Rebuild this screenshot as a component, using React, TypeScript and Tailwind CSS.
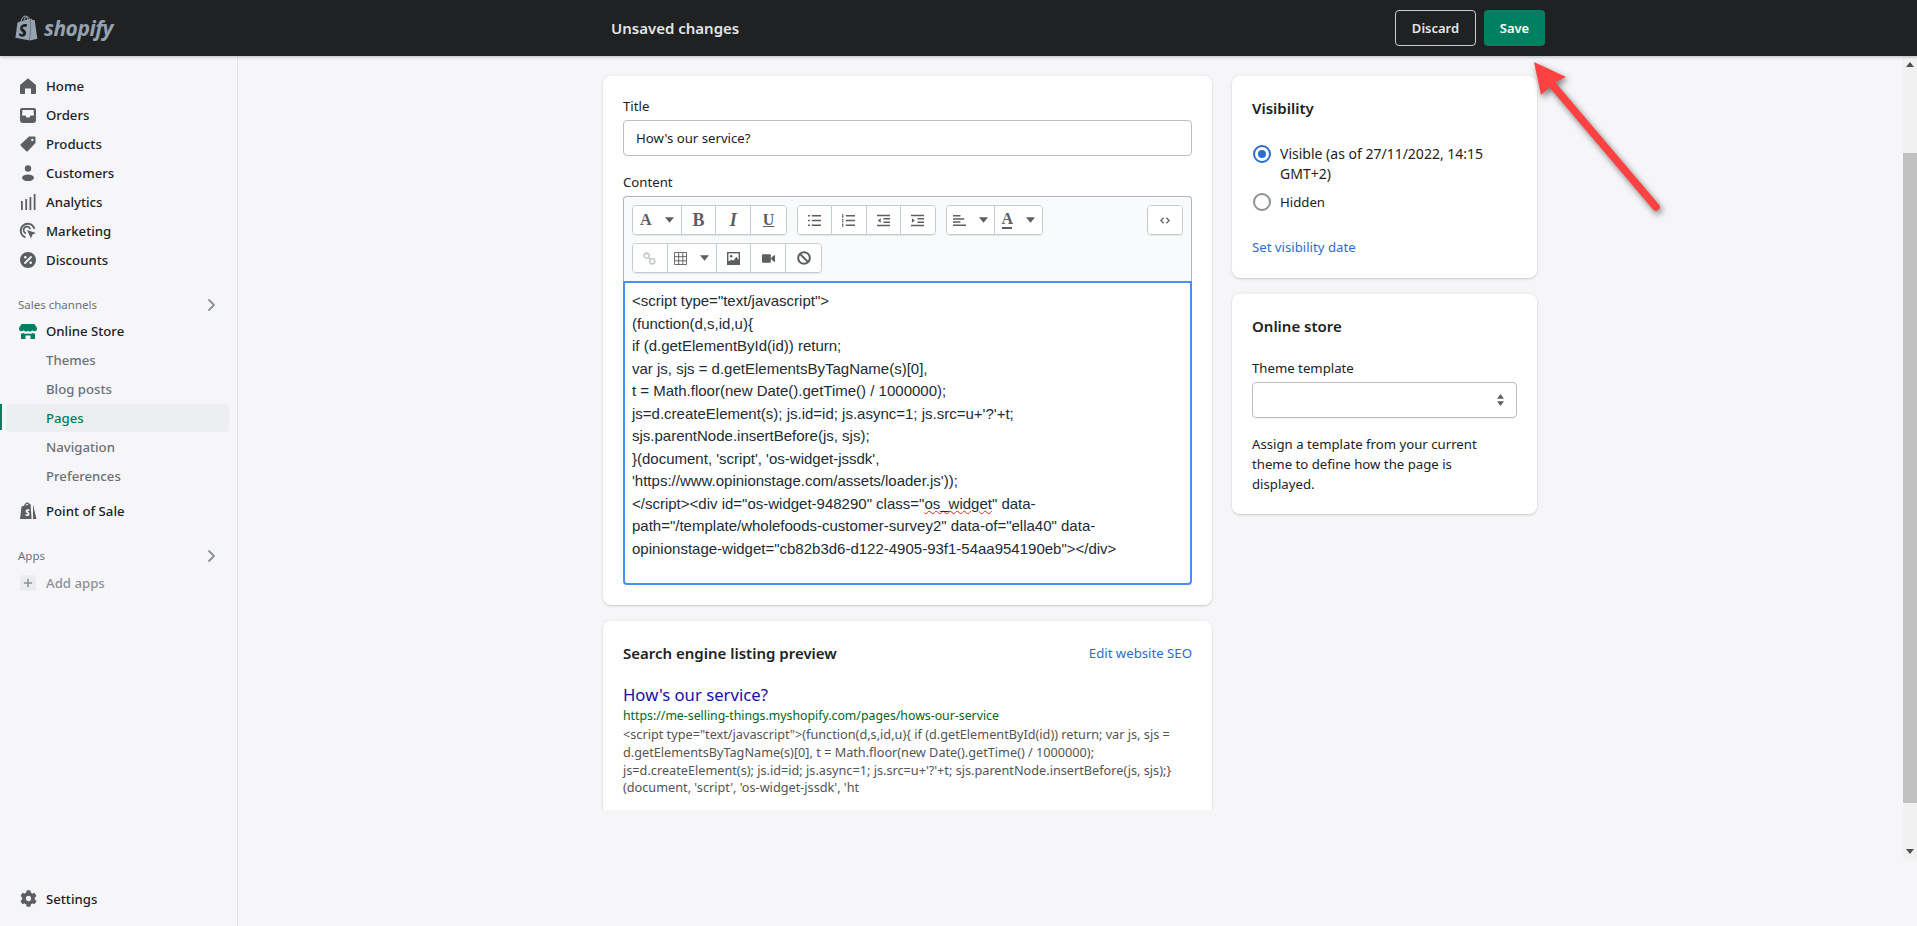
import type { ReactNode } from "react";
import { FaCog } from "react-icons/fa";
import { SiShopify } from "react-icons/si";

const ICON = "w-[20px] h-[20px] shrink-0";

const HomeIcon = () => (
  <svg viewBox="0 0 20 20" className={ICON} fill="#5c5f62">
    <path d="M10 2.200 2.400 8.700a1.200 1.200 0 0 0-.4.9V17a1 1 0 0 0 1 1h4v-5.500h6V18h4a1 1 0 0 0 1-1V9.600a1.200 1.200 0 0 0-.4-.9z" />
  </svg>
);
const OrdersIcon = () => (
  <svg viewBox="0 0 20 20" className={ICON} fill="#5c5f62">
    <path fillRule="evenodd" d="M4 3h12a2 2 0 0 1 2 2v10a3 3 0 0 1-3 3H5a3 3 0 0 1-3-3V5a2 2 0 0 1 2-2zm.5 2-.5 5.500h3.500l1 2h3l1-2H16L15.500 5z" />
  </svg>
);
const ProductsIcon = () => (
  <svg viewBox="0 0 20 20" className={ICON} fill="#5c5f62">
    <path fillRule="evenodd" d="M11 2.500h5.500a1 1 0 0 1 1 1V9L9.700 17.300a1 1 0 0 1-1.400 0l-5.600-5.600a1 1 0 0 1 0-1.400zm3.300 2.200a1.200 1.200 0 1 0 0 2.400 1.200 1.200 0 0 0 0-2.400z" />
  </svg>
);
const CustomersIcon = () => (
  <svg viewBox="0 0 20 20" className={ICON} fill="#5c5f62">
    <circle cx="10" cy="5.500" r="3.200" />
    <ellipse cx="10" cy="14.800" rx="6" ry="3.300" />
  </svg>
);
const AnalyticsIcon = () => (
  <svg viewBox="0 0 20 20" className={ICON} fill="#5c5f62">
    <rect x="3" y="9" width="1.800" height="9" />
    <rect x="7.300" y="7" width="1.800" height="11" />
    <rect x="11.500" y="5" width="1.800" height="13" />
    <rect x="15.700" y="2" width="1.800" height="16" />
  </svg>
);
const MarketingIcon = () => (
  <svg viewBox="0 0 20 20" className={ICON} fill="none" stroke="#5c5f62" strokeWidth="1.800">
    <path d="M7.500 16.400a7 7 0 1 1 8.900-8.700" />
    <path d="M8 12.300a3.400 3.400 0 1 1 4.200-4.300" />
    <path d="M9 9l9 3-3.500 1.500L13 17.500z" fill="#5c5f62" stroke="none" />
  </svg>
);
const DiscountsIcon = () => (
  <svg viewBox="0 0 20 20" className={ICON}>
    <circle cx="10" cy="10" r="8" fill="#5c5f62" />
    <path d="M7 13l6-6" stroke="#f6f6f8" strokeWidth="1.800" strokeLinecap="round" />
    <circle cx="7.300" cy="7.300" r="1.300" fill="#f6f6f8" />
    <circle cx="12.700" cy="12.700" r="1.300" fill="#f6f6f8" />
  </svg>
);
const StoreIcon = () => (
  <svg viewBox="0 0 20 20" className={ICON} fill="#008060">
    <path d="M4 3h12a1 1 0 0 1 .8.400L19 7v1a2.500 2.500 0 0 1-4.500 1.300 3 3 0 0 1-4.500.4 3 3 0 0 1-4.500-.4A2.500 2.500 0 0 1 1 8V7l2.200-3.600A1 1 0 0 1 4 3z" />
    <path d="M3 12.500a4 4 0 0 0 2.500-.6 5 5 0 0 0 4.500.5 5 5 0 0 0 4.500-.5 4 4 0 0 0 2.500.6V18h-4.500v-3.500h-5V18H3z" />
  </svg>
);
const PosIcon = () => (
  <svg viewBox="0 0 20 20" className={ICON} fill="#5c5f62">
    <path fillRule="evenodd" d="M9.500 1.500c1 0 1.700.6 2.100 1.500l1 .1 1 14.900H2l1.500-12.500 2.500-.8C6.500 3 7.800 1.500 9.500 1.500zm-.1 1.200c-.9 0-1.600.8-1.900 1.700l3-.9c-.2-.5-.6-.8-1.100-.8zM9.800 8.300c-2.300 0-3 2.700-.9 3.800.9.500 1 1.500.2 1.500-.6 0-1.400-.5-1.400-.5l-.4 1.400s.7.600 1.800.6c2.800 0 3-3 1.200-4.200-.8-.6-.9-1 0-1.100.5 0 1 .2 1 .2l.4-1.400s-.6-.3-1.900-.3z" />
    <path d="M15 3.500 18.500 18H15z" />
  </svg>
);

const NavRow = ({ icon, label, h = "h-[29px]" }: { icon: ReactNode; label: string; h?: string }) => (
  <div className={`flex items-center ${h} pl-[18px] gap-[8px] text-[#202223] font-medium`}>
    {icon}
    <span>{label}</span>
  </div>
);

const SubRow = ({ label }: { label: string }) => (
  <div className="flex items-center h-[29px] pl-[46px] text-[#6d7175] font-medium">{label}</div>
);

const Chevron = () => (
  <svg viewBox="0 0 20 20" className="w-[20px] h-[20px]" fill="none" stroke="#8c9196" strokeWidth="1.800" strokeLinecap="round" strokeLinejoin="round">
    <path d="M8 5l5 5-5 5" />
  </svg>
);

const Sidebar = () => (
  <aside className="w-[238px] shrink-0 flex flex-col border-r border-[#e1e3e5] pt-[15px] pb-[13px] text-[13.200px]">
    <NavRow icon={<HomeIcon />} label="Home" />
    <NavRow icon={<OrdersIcon />} label="Orders" />
    <NavRow icon={<ProductsIcon />} label="Products" />
    <NavRow icon={<CustomersIcon />} label="Customers" />
    <NavRow icon={<AnalyticsIcon />} label="Analytics" />
    <NavRow icon={<MarketingIcon />} label="Marketing" />
    <NavRow icon={<DiscountsIcon />} label="Discounts" />

    <div className="mt-[19px] flex items-center justify-between h-[24px] pl-[18px] pr-[16px] text-[11.500px] text-[#6d7175]">
      <span>Sales channels</span>
      <Chevron />
    </div>
    <NavRow icon={<StoreIcon />} label="Online Store" h="h-[28px]" />
    <SubRow label="Themes" />
    <SubRow label="Blog posts" />
    <div className="relative h-[29px] flex items-center">
      <div className="absolute left-0 top-[1px] w-[1.500px] h-[26px] bg-[#008060]" />
      <div className="ml-[6px] w-[223px] h-[28px] rounded-[4px] bg-[#edeeef] flex items-center pl-[40px] text-[#008060] font-medium">
        Pages
      </div>
    </div>
    <SubRow label="Navigation" />
    <SubRow label="Preferences" />
    <div className="mt-[6px]">
      <NavRow icon={<PosIcon />} label="Point of Sale" />
    </div>

    <div className="mt-[19px] flex items-center justify-between h-[24px] pl-[18px] pr-[16px] text-[11.500px] text-[#6d7175]">
      <span>Apps</span>
      <Chevron />
    </div>
    <div className="flex items-center h-[29px] pl-[20px] gap-[10px] text-[#8c9196] font-medium">
      <div className="w-[16px] h-[16px] rounded-[3px] bg-[#ebecee] flex items-center justify-center text-[#8c9196]">
        <svg viewBox="0 0 12 12" className="w-[10px] h-[10px]" stroke="#8c9196" strokeWidth="1.800">
          <path d="M6 1v10M1 6h10" />
        </svg>
      </div>
      <span>Add apps</span>
    </div>

    <div className="mt-auto flex items-center h-[29px] pl-[18px] gap-[8px] text-[#202223] font-medium">
      <span className="w-[20px] flex justify-center">
        <FaCog className="w-[17px] h-[17px] text-[#5c5f62]" />
      </span>
      <span>Settings</span>
    </div>
  </aside>
);

const TB = ({ w = "w-[35px]", children, last }: { w?: string; children: ReactNode; last?: boolean }) => (
  <div className={`${w} h-full flex items-center justify-center gap-[13px] bg-white ${last ? "" : "border-r border-[#c4cdd5]"}`}>
    {children}
  </div>
);

const Group = ({ w, children }: { w: string; children: ReactNode }) => (
  <div className={`${w} flex h-[30px] rounded-[4px] border border-[#c9cccf] overflow-hidden shadow-[0_1px_0_rgba(0,0,0,0.08)]`}>
    {children}
  </div>
);

const Caret = () => (
  <svg viewBox="0 0 10 6" className="w-[9px] h-[6px]" fill="#5c5f62">
    <path d="M0 0h10L5 6z" />
  </svg>
);

const Letter = ({ className, children }: { className: string; children: string }) => (
  <span className={`font-['Liberation_Serif',serif] text-[16px] leading-none text-[#5c5f62] ${className}`}>{children}</span>
);

const Lines = ({ d }: { d: string }) => (
  <svg viewBox="0 0 14 14" className="w-[13px] h-[13px]" stroke="#5c5f62" strokeWidth="1.600" fill="#5c5f62">
    <path d={d} />
  </svg>
);

const Toolbar = () => (
  <div className="border border-b-0 border-[#aeb4b9] rounded-t-[4px] bg-[#f9fafb] p-[8px] flex flex-col gap-[8px]">
    <div className="flex gap-[10px]">
      <Group w="w-[155px]">
        <TB w="w-[49px]">
          <Letter className="font-bold">A</Letter>
          <Caret />
        </TB>
        <TB>
          <Letter className="font-bold text-[18px]">B</Letter>
        </TB>
        <TB>
          <Letter className="italic font-bold text-[18px]">I</Letter>
        </TB>
        <TB last>
          <Letter className="font-bold underline">U</Letter>
        </TB>
      </Group>
      <Group w="w-[139px]">
        <TB>
          <Lines d="M4 2h10M4 7h10M4 12h10M0 2h2M0 7h2M0 12h2" />
        </TB>
        <TB>
          <Lines d="M4 2h10M4 7h10M4 12h10M0 1h1.500M0 3h1.500M0 6h1.500M0 8h1.500M0 11h1.500M0 13h1.500" />
        </TB>
        <TB>
          <svg viewBox="0 0 14 14" className="w-[13px] h-[13px]" stroke="#5c5f62" strokeWidth="1.600" fill="#5c5f62">
            <path d="M0 1.500h14M7 5h7M7 9h7M0 12.500h14" />
            <path d="M4 4.500v5L0.800 7z" stroke="none" />
          </svg>
        </TB>
        <TB last>
          <svg viewBox="0 0 14 14" className="w-[13px] h-[13px]" stroke="#5c5f62" strokeWidth="1.600" fill="#5c5f62">
            <path d="M0 1.500h14M7 5h7M7 9h7M0 12.500h14" />
            <path d="M1 4.500v5L4.200 7z" stroke="none" />
          </svg>
        </TB>
      </Group>
      <Group w="w-[97px]">
        <TB w="w-[49px]">
          <Lines d="M0 2h8M0 5.300h12M0 8.700h8M0 12h14" />
          <Caret />
        </TB>
        <TB w="w-[49px]" last>
          <span className="flex flex-col items-center">
            <Letter className="font-bold text-[14px]">A</Letter>
            <span className="block w-[10px] h-[2px] bg-[#5c5f62]" />
          </span>
          <Caret />
        </TB>
      </Group>
      <div className="ml-auto">
        <Group w="w-[36px]">
          <TB w="w-[36px]" last>
            <svg viewBox="0 0 14 10" className="w-[10px] h-[7px]" fill="none" stroke="#5c5f62" strokeWidth="1.800">
              <path d="M5 1 1 5l4 4M9 1l4 4-4 4" />
            </svg>
          </TB>
        </Group>
      </div>
    </div>
    <div className="flex">
      <Group w="w-[190px]">
        <TB>
          <svg viewBox="0 0 14 14" className="w-[13px] h-[13px]" fill="none" stroke="#c4c8cc" strokeWidth="1.700">
            <circle cx="4" cy="4" r="2.800" />
            <circle cx="10" cy="10" r="2.800" />
            <path d="M6 6l2 2" />
          </svg>
        </TB>
        <TB w="w-[49px]">
          <svg viewBox="0 0 14 14" className="w-[13px] h-[13px]" fill="none" stroke="#5c5f62" strokeWidth="1">
            <path d="M.5.500h13v13H.5zM.5 5h13M.5 9.500h13M5 .5v13M9.500.5v13" />
          </svg>
          <Caret />
        </TB>
        <TB>
          <svg viewBox="0 0 14 14" className="w-[13px] h-[13px]">
            <rect x="0" y="0" width="14" height="14" fill="#5c5f62" />
            <rect x="1.500" y="1.500" width="11" height="8" fill="#fff" />
            <circle cx="4.500" cy="4.500" r="1.400" fill="#5c5f62" />
            <path d="M1.500 11l3.500-3 2 1.500L10 5l3 4v3H1.500z" fill="#5c5f62" />
          </svg>
        </TB>
        <TB>
          <svg viewBox="0 0 14 14" className="w-[13px] h-[13px]" fill="#5c5f62">
            <rect x="0" y="2.500" width="9.500" height="9" rx="1" />
            <path d="M10 6l4-3v8l-4-3z" />
          </svg>
        </TB>
        <TB last>
          <svg viewBox="0 0 14 14" className="w-[14px] h-[14px]" fill="none" stroke="#5c5f62" strokeWidth="2">
            <circle cx="7" cy="7" r="5.800" />
            <path d="M3 3l8 8" />
          </svg>
        </TB>
      </Group>
    </div>
  </div>
);

const CODE_LINES: ReactNode[] = [
  '<script type="text/javascript">',
  "(function(d,s,id,u){",
  "if (d.getElementById(id)) return;",
  "var js, sjs = d.getElementsByTagName(s)[0],",
  "t = Math.floor(new Date().getTime() / 1000000);",
  "js=d.createElement(s); js.id=id; js.async=1; js.src=u+'?'+t;",
  "sjs.parentNode.insertBefore(js, sjs);",
  "}(document, 'script', 'os-widget-jssdk',",
  "'https://www.opinionstage.com/assets/loader.js'));",
  <>
    {'</script><div id="os-widget-948290" class="'}
    <span className="underline decoration-wavy decoration-[#e02020] decoration-1">os_widget</span>
    {'" data-'}
  </>,
  'path="/template/wholefoods-customer-survey2" data-of="ella40" data-',
  'opinionstage-widget="cb82b3d6-d122-4905-93f1-54aa954190eb"></div>',
];

const CARD = "bg-white rounded-[8px] shadow-[0_0_5px_rgba(23,24,24,0.05),0_1px_2px_rgba(0,0,0,0.15)]";

const Radio = ({ on }: { on?: boolean }) => (
  <span
    className={`ml-px w-[18px] h-[18px] shrink-0 rounded-full border-2 flex items-center justify-center ${
      on ? "border-[#2c6ecb]" : "border-[#8c9196]"
    }`}
  >
    {on && <span className="w-[8px] h-[8px] rounded-full bg-[#2c6ecb]" />}
  </span>
);

export default function App() {
  return (
    <div className="relative h-screen flex flex-col overflow-hidden bg-[#f6f6f8] font-['Noto_Sans',sans-serif] text-[13.200px] leading-[20px] text-[#202223]">
      {/* Top bar */}
      <header className="h-[56px] shrink-0 flex items-center bg-[#202123] shadow-[0_1px_3px_rgba(0,0,0,0.25)] z-10">
        <div className="w-[603px] shrink-0 pl-[14px] flex items-center gap-[5px] text-[#95a3b0]">
          <SiShopify className="w-[25px] h-[28px]" />
          <span className="font-['Open_Sans',sans-serif] font-bold italic text-[21px] leading-none tracking-[-0.5px]">shopify</span>
        </div>
        <div className="w-[792px] shrink-0 pl-[8px] text-[15px] font-semibold text-[#e3e5e7]">Unsaved changes</div>
        <div className="flex gap-[8px] font-semibold text-[13px]">
          <div className="w-[81px] h-[36px] rounded-[4px] border border-[#c4cdd5] flex items-center justify-center text-[#e3e5e7]">Discard</div>
          <div className="w-[61px] h-[36px] rounded-[4px] bg-[#008060] flex items-center justify-center text-white">Save</div>
        </div>
      </header>

      <div className="flex-1 flex min-h-0">
        <Sidebar />
        <main className="flex-1 min-w-0 overflow-hidden pl-[365px] pt-[20px] flex gap-[20px] items-start">
          {/* Main column */}
          <div className="w-[609px] shrink-0 flex flex-col gap-[16px]">
            <section className={`${CARD} p-[20px]`}>
              <div>Title</div>
              <div className="mt-[4px] h-[36px] rounded-[4px] border border-[#babfc3] flex items-center px-[12px]">How's our service?</div>
              <div className="mt-[16px]">Content</div>
              <div className="mt-[4px]">
                <Toolbar />
                <div className="h-[304px] border-2 border-[#458fff] rounded-b-[4px] pt-[7px] pl-[7px] font-['Liberation_Sans',Arial,sans-serif] text-[15px] leading-[22.500px] text-[#212b36]">
                  {CODE_LINES.map((line, i) => (
                    <div key={i} className="whitespace-nowrap">
                      {line}
                    </div>
                  ))}
                </div>
              </div>
            </section>

            <section className={`${CARD} h-[189px] [clip-path:inset(-6px_-6px_0_-6px)] overflow-hidden rounded-b-none px-[20px] pt-[20px]`}>
              <div className="flex items-center justify-between h-[24px]">
                <h2 className="text-[15px] font-semibold">Search engine listing preview</h2>
                <span className="text-[#2c6ecb]">Edit website SEO</span>
              </div>
              <div className="mt-[18px] text-[16.700px] leading-[24px] text-[#1a0dab]">How's our service?</div>
              <div className="text-[12.300px] leading-[18px] text-[#006621]">https://me-selling-things.myshopify.com/pages/hows-our-service</div>
              <div className="mt-px text-[12.700px] leading-[17.800px] text-[#545454]">
                <div>{'<script type="text/javascript">(function(d,s,id,u){ if (d.getElementById(id)) return; var js, sjs ='}</div>
                <div>{"d.getElementsByTagName(s)[0], t = Math.floor(new Date().getTime() / 1000000);"}</div>
                <div>{"js=d.createElement(s); js.id=id; js.async=1; js.src=u+'?'+t; sjs.parentNode.insertBefore(js, sjs);}"}</div>
                <div>{"(document, 'script', 'os-widget-jssdk', 'ht"}</div>
              </div>
            </section>
          </div>

          {/* Side column */}
          <div className="w-[305px] shrink-0 flex flex-col gap-[16px]">
            <section className={`${CARD} px-[20px] pt-[20px] pb-[21px]`}>
              <h2 className="text-[15px] leading-[24px] font-semibold">Visibility</h2>
              <div className="mt-[24px] flex gap-[9px]">
                <span className="pt-px"><Radio on /></span>
                <span className="text-[14px]">
                  Visible (as of 27/11/2022, 14:15
                  <br />
                  GMT+2)
                </span>
              </div>
              <div className="mt-[8px] flex gap-[9px] items-center">
                <Radio />
                <span>Hidden</span>
              </div>
              <div className="mt-[25px] text-[#2c6ecb]">Set visibility date</div>
            </section>

            <section className={`${CARD} p-[20px]`}>
              <h2 className="text-[15px] leading-[24px] font-semibold">Online store</h2>
              <div className="mt-[20px]">Theme template</div>
              <div className="mt-[4px] h-[36px] rounded-[4px] border border-[#babfc3] shadow-[0_1px_0_rgba(0,0,0,0.05)] flex items-center justify-end pr-[12px]">
                <svg viewBox="0 0 8 14" className="w-[7px] h-[12px]" fill="#5c5f62">
                  <path d="M4 0l4 5.500H0zM4 14l4-5.500H0z" />
                </svg>
              </div>
              <p className="mt-[16px]">
                Assign a template from your current
                <br />
                theme to define how the page is
                <br />
                displayed.
              </p>
            </section>
          </div>
        </main>

        {/* Scrollbar */}
        <div className="w-[14px] shrink-0 h-[804px] bg-[#f1f1f1] flex flex-col">
          <div className="h-[97px] pt-[6px] flex justify-center">
            <svg viewBox="0 0 8 5" className="w-[8px] h-[5px]" fill="#505050"><path d="M4 0l4 5H0z" /></svg>
          </div>
          <div className="h-[650px] bg-[#c1c1c1]" />
          <div className="flex-1 pt-[46px] flex justify-center">
            <svg viewBox="0 0 8 5" className="w-[8px] h-[5px]" fill="#505050"><path d="M0 0h8L4 5z" /></svg>
          </div>
        </div>
      </div>

      {/* Annotation arrow */}
      <svg viewBox="0 0 160 180" className="absolute left-[1520px] top-[50px] w-[160px] h-[180px] z-20 drop-shadow-[2px_3px_3px_rgba(0,0,0,0.5)]">
        <path d="M30 32l106 125" stroke="#ff4141" strokeWidth="7.500" strokeLinecap="round" />
        <path d="M14 12l32 15-12 6-13 12z" fill="#ff4141" />
      </svg>
    </div>
  );
}
